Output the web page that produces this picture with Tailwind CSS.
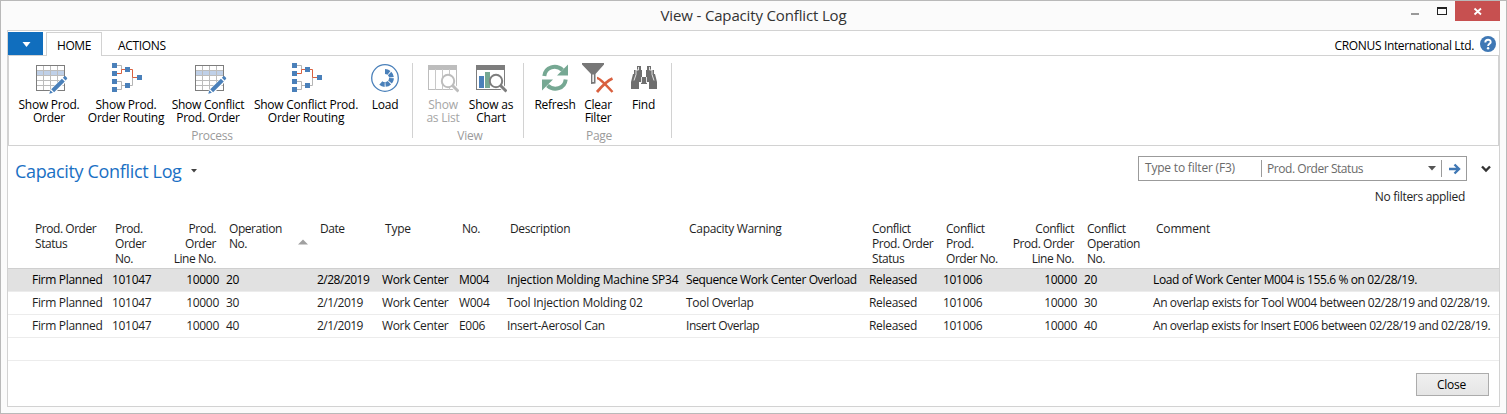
<!DOCTYPE html>
<html lang="en">
<head>
<meta charset="utf-8">
<title>View - Capacity Conflict Log</title>
<script src="https://cdn.jsdelivr.net/npm/@tailwindcss/browser@4"></script>
</head>
<body class="h-[414px] w-[1507px] overflow-hidden font-['Open_Sans','Noto_Sans',sans-serif] text-[12px] tracking-[-0.24px] text-[#1e1e1e]">
<svg width="0" height="0" class="absolute">
  <symbol id="tbl" viewBox="33 63 32 32" overflow="visible">
    <rect x="36.5" y="65.5" width="28" height="25" fill="#fff"/>
    <rect x="37" y="70" width="27" height="5.5" fill="#bfd0e8"/>
    <path d="M43.5 66v24M50.5 66v24M57.5 66v24M37 70.500h27M37 75.500h27M37 80.500h27M37 85.500h27" stroke="#bcbcbc" fill="none"/>
    <rect x="36.500" y="65.500" width="28" height="25" fill="none" stroke="#7d7d7d"/>
    <path d="M48 95.500l2-5.500 13-13 5 3-14 14z" fill="#fff"/>
    <path d="M49.300 93.800l1-3.600 2.600 2.600zM51.200 89.300l10.700-10.600 2.900 2.900-10.700 10.600zM62.900 77.800l1.500-1.500q.6-.5 1.200 0l1.400 1.400q.5.6 0 1.200l-1.500 1.500z" fill="#4a80ba"/>
  </symbol>
  <symbol id="rt" viewBox="110 63 32 32" overflow="visible">
    <path d="M117 65.500h4.500v4M117 81.500h4.500v8H117M121.500 85.500h4M130 85.500h2.500v-8" stroke="#b5b5b5" fill="none"/>
    <path d="M117 73.500h4.500v-4h4M130 69.500h2.500v8h5" stroke="#d9603f" fill="none"/>
    <path d="M112 63h5v5h-5zM112 71h5v5h-5zM112 79h5v5h-5zM112 87h5v5h-5zM125 67h5v5h-5zM125 83h5v5h-5zM137 75h5v5h-5z" fill="#4a80ba"/>
  </symbol>
</svg>
<div class="flex h-full flex-col border border-[#b9b9b9] bg-[#fbfbfb] px-[6px] pb-[6px]">
  <div class="relative flex h-[29px] shrink-0 items-center justify-center text-[15px] tracking-[-0.15px] text-[#333]">
    <span class="whitespace-nowrap">View - Capacity Conflict Log</span>
    <div class="absolute top-0 right-0 flex h-[20px]">
      <svg width="96" height="20" viewBox="0 0 96 20"><rect x="51" y="0" width="45" height="20" fill="#c75050"/><rect x="7" y="12" width="8" height="2" fill="#999"/><path d="M33 6h10v8H33zM34 8v5h8V8z" fill="#222" fill-rule="evenodd"/><path d="M70.500 7.500l6.500 6M77 7.500l-6.500 6" stroke="#fff" stroke-width="1.800"/></svg>
    </div>
  </div>
  <div class="flex min-h-0 flex-1 flex-col border border-[#d2d2d2] bg-white">
    <div class="flex h-[24px] shrink-0 items-stretch pt-[1px]">
      <div class="flex w-[35px] items-start bg-[#106ebe]"><svg width="35" height="23"><path d="M14.500 10h8l-4 5z" fill="#fff"/></svg></div>
      <div class="z-10 ml-[3px] flex h-[24px] w-[56px] items-center justify-center border border-b-0 border-[#d2d2d2] bg-white pt-[3px] text-black tracking-[-0.4px]">HOME</div>
      <div class="ml-[16px] flex items-center pt-[4px] text-black tracking-[-0.33px]">ACTIONS</div>
      <div class="mr-[3px] ml-auto flex items-center gap-[6px] text-black tracking-[-0.35px]"><span class="pt-[4px]">CRONUS International Ltd.</span>
        <svg width="16" height="16" class="mt-[1px]"><circle cx="8" cy="8" r="8" fill="#3f78b5"/><path d="M5.300 6.400C5.300 2.700 10.900 3 10.700 6.100 10.600 7.800 8.100 8 8.100 10" stroke="#fff" stroke-width="1.900" fill="none"/><circle cx="8.100" cy="12.300" r="1.200" fill="#fff"/></svg>
      </div>
    </div>
    <div class="flex h-[91px] shrink-0 border border-[#d2d2d2] text-center leading-[13px] text-black">
      <div class="-mt-px flex w-[403px] flex-col pt-[8px]">
        <div class="flex h-[66px] whitespace-nowrap">
          <div class="flex w-[80px] flex-col items-center gap-[3px]"><svg width="32" height="32" class="shrink-0 overflow-visible"><use href="#tbl"/></svg><div>Show Prod.<br>Order</div></div>
          <div class="flex w-[74px] flex-col items-center gap-[3px]"><svg width="32" height="32" class="shrink-0 overflow-visible"><use href="#rt"/></svg><div>Show Prod.<br>Order Routing</div></div>
          <div class="flex w-[90px] flex-col items-center gap-[3px]"><svg width="32" height="32" class="shrink-0 overflow-visible"><use href="#tbl"/></svg><div>Show Conflict<br>Prod. Order</div></div>
          <div class="flex w-[106px] flex-col items-center gap-[3px]"><svg width="32" height="32" class="shrink-0 overflow-visible"><use href="#rt"/></svg><div>Show Conflict Prod.<br>Order Routing</div></div>
          <div class="flex w-[52px] flex-col items-center gap-[3px]"><svg width="32" height="32" viewBox="369 63 32 32" class="shrink-0"><circle cx="385" cy="78" r="13.300" fill="#fff" stroke="#4a80ba" stroke-width="1.300"/><path d="M385 71.500a6.500 6.500 0 1 1-4.200 11.500" fill="none" stroke="#4a80ba" stroke-width="4.800" stroke-dasharray="4.300 .8"/></svg><div>Load</div></div>
        </div>
        <div class="pl-[3px] text-[#9b9b9b]">Process</div>
      </div>
      <div class="mt-[7px] h-[75px] w-px bg-[#d2d2d2]"></div>
      <div class="-mt-px flex w-[110px] flex-col pt-[8px]">
        <div class="flex h-[66px] whitespace-nowrap pl-[6px]">
          <div class="flex w-[48px] flex-col items-center gap-[3px] text-[#a5a5a5]"><svg width="32" height="32" viewBox="427 63 32 32" class="shrink-0"><rect x="428.500" y="65.500" width="28" height="24" fill="#fff" stroke="#bdbdbd"/><path d="M428 65h29v5h-29z" fill="#bdbdbd"/><path d="M435.500 69v21M442.500 69v21M449.500 69v21" stroke="#c8c8c8"/><path d="M451 84l8 8" stroke="#fff" stroke-width="5"/><circle cx="448" cy="81" r="6.200" fill="#fff" stroke="#bdbdbd" stroke-width="2"/><path d="M452.500 85.500l6 6" stroke="#bdbdbd" stroke-width="3"/></svg><div>Show<br>as List</div></div>
          <div class="flex w-[48px] flex-col items-center gap-[3px]"><svg width="32" height="32" viewBox="476 63 32 32" class="shrink-0"><rect x="477.500" y="65.500" width="28" height="24" fill="#fff" stroke="#7d7d7d"/><path d="M477 65h29v5h-29z" fill="#7d7d7d"/><path d="M480 76h5v12h-5z" fill="#4a80ba"/><path d="M486 72h5v16h-5z" fill="#76a893"/><path d="M500 84l8 8" stroke="#fff" stroke-width="5"/><circle cx="497" cy="81" r="6.200" fill="#fff" stroke="#7d7d7d" stroke-width="2"/><path d="M501.500 85.500l6 6" stroke="#7d7d7d" stroke-width="3"/></svg><div>Show as<br>Chart</div></div>
        </div>
        <div class="pl-[4px] text-[#9b9b9b]">View</div>
      </div>
      <div class="mt-[7px] h-[75px] w-px bg-[#d2d2d2]"></div>
      <div class="-mt-px flex w-[147px] flex-col pt-[8px]">
        <div class="flex h-[66px] whitespace-nowrap pl-[8px]">
          <div class="flex w-[46px] flex-col items-center gap-[3px]"><svg width="32" height="32" viewBox="539 63 32 32" class="shrink-0"><path d="M544.300 76c1-9 11.500-12 18.200-6" fill="none" stroke="#76a893" stroke-width="4"/><path d="M568 64.500v11h-11z" fill="#76a893"/><path d="M565.700 79.500c-1 9-11.500 12-18.200 6" fill="none" stroke="#76a893" stroke-width="4"/><path d="M542 90.500v-11h11z" fill="#76a893"/></svg><div>Refresh</div></div>
          <div class="flex w-[40px] flex-col items-center gap-[3px]"><svg width="34" height="32" viewBox="584 63 34 32" class="shrink-0"><path d="M585 63h22v1.500l-8.500 9.500v9.500l-4.500.5V74l-9-9.500z" fill="#777"/><path d="M595.300 74.500h1.700v7.500h-1.700z" fill="#eee"/><path d="M600 78c2 0 10 8 15.500 14" stroke="#d9603f" stroke-width="2.400" fill="none"/><path d="M615.500 78.500c-5 2-10 7-15.500 13.500" stroke="#d9603f" stroke-width="2.800" fill="none"/></svg><div>Clear<br>Filter</div></div>
          <div class="flex w-[51px] flex-col items-center gap-[3px]"><svg width="32" height="32" viewBox="628 63 32 32" class="shrink-0"><path d="M637 66h4v4h1v7h4v-7h1v-4h4v4h3v4h1l2 8v7h-8v-7h-2v2h-6v-2h-2v7h-8v-7l2-8h1v-4h3z" fill="#6e6e6e"/><path d="M638.500 67v3h-2.500v4.500l-2 6M649.500 67v3h2.500v4.500l2 6M641.500 77v6M646.500 77v6" fill="none" stroke="#fff" stroke-width=".8"/></svg><div>Find</div></div>
        </div>
        <div class="pl-[3px] text-[#9b9b9b]">Page</div>
      </div>
      <div class="mt-[7px] h-[75px] w-px bg-[#d2d2d2]"></div>
    </div>
    <div class="flex h-[75px] shrink-0 justify-between pl-[7px]">
      <div class="flex h-[50px] items-center gap-[9px] text-[18px] tracking-[-0.34px] text-[#1a70c4]"><span class="whitespace-nowrap">Capacity Conflict Log</span><svg width="7" height="6"><path d="M0 1h6L3 4.500z" fill="#444"/></svg></div>
      <div class="flex flex-col pt-[10px]">
        <div class="flex items-center">
          <div class="flex h-[25px] w-[329px] items-center border border-[#9b9b9b] bg-white text-[#6a6a6a]">
            <span class="w-[122px] pb-[2px] pl-[6px] tracking-[-0.2px]">Type to filter (F3)</span>
            <span class="h-[17px] w-px bg-[#9b9b9b]"></span>
            <span class="w-[166px] pl-[5px] tracking-[-0.45px]">Prod. Order Status</span>
            <svg width="8" height="5"><path d="M0 0h8L4 4.500z" fill="#555"/></svg>
            <span class="ml-[5px] h-[17px] w-px bg-[#9b9b9b]"></span>
            <svg width="12" height="12" class="ml-[7px]"><path d="M0 6h10M5.500 1.500L10 6 5.500 10.500" fill="none" stroke="#4078b5" stroke-width="2.400"/></svg>
          </div>
          <svg width="10" height="8" class="mr-[8px] ml-[14px]"><path d="M1 1.500l4 4 4-4" fill="none" stroke="#333" stroke-width="2.400"/></svg>
        </div>
        <div class="mt-[7px] mr-[34px] text-right leading-[18px] tracking-[-0.31px]">No filters applied</div>
      </div>
    </div>
    <div class="grid h-[48px] shrink-0 grid-cols-[24px_80px_50px_57px_7px_91px_65px_77px_48px_179px_183px_74px_60px_74px_7px_69px_minmax(0,1fr)] border-b border-[#cfcfcf] leading-[15px] tracking-[-0.45px] whitespace-nowrap [&>*]:pl-[3px]">
      <i></i><div>Prod. Order<br>Status</div><div>Prod.<br>Order<br>No.</div><div class="pr-[3px] text-right">Prod.<br>Order<br>Line No.</div><i></i><div class="flex items-center justify-between"><span class="self-start">Operation<br>No.</span><svg width="10" height="6" class="mr-[9px] mb-[5px]"><path d="M0 5.500h10L5 .5z" fill="#a0a0a0"/></svg></div><div>Date</div><div class="tracking-[-0.2px]">Type</div><div>No.</div><div class="tracking-[-0.35px]">Description</div><div class="tracking-[-0.3px]">Capacity Warning</div><div>Conflict<br>Prod. Order<br>Status</div><div>Conflict<br>Prod.<br>Order No.</div><div class="pr-[3px] text-right">Conflict<br>Prod. Order<br>Line No.</div><i></i><div>Conflict<br>Operation<br>No.</div><div class="tracking-[-0.2px]">Comment</div>
    </div>
    <div class="grid shrink-0 auto-rows-[23px] grid-cols-[24px_80px_50px_57px_7px_91px_65px_77px_48px_179px_183px_74px_60px_74px_7px_69px_minmax(0,1fr)] leading-[22px] tracking-[-0.3px] whitespace-nowrap [&>*]:border-b [&>*]:border-[#ececec]">
      <div class="col-span-full grid grid-cols-subgrid bg-[#e1e1e1] text-black"><i></i><div>Firm Planned</div><div>101047</div><div class="text-right">10000</div><i></i><div>20</div><div class="tracking-[-0.5px]">2/28/2019</div><div class="tracking-[-0.35px]">Work Center</div><div>M004</div><div class="tracking-[-0.22px]">Injection Molding Machine SP34</div><div class="tracking-[-0.4px]">Sequence Work Center Overload</div><div>Released</div><div>101006</div><div class="text-right">10000</div><i></i><div>20</div><div class="tracking-[-0.38px]">Load of Work Center M004 is 155.6 % on 02/28/19.</div></div>
      <div class="col-span-full grid grid-cols-subgrid"><i></i><div>Firm Planned</div><div>101047</div><div class="text-right">10000</div><i></i><div>30</div><div class="tracking-[-0.5px]">2/1/2019</div><div class="tracking-[-0.35px]">Work Center</div><div>W004</div><div class="tracking-[-0.2px]">Tool Injection Molding 02</div><div>Tool Overlap</div><div>Released</div><div>101006</div><div class="text-right">10000</div><i></i><div>30</div><div class="tracking-[-0.4px]">An overlap exists for Tool W004 between 02/28/19 and 02/28/19.</div></div>
      <div class="col-span-full grid grid-cols-subgrid"><i></i><div>Firm Planned</div><div>101047</div><div class="text-right">10000</div><i></i><div>40</div><div class="tracking-[-0.5px]">2/1/2019</div><div class="tracking-[-0.35px]">Work Center</div><div>E006</div><div class="tracking-[-0.3px]">Insert-Aerosol Can</div><div class="tracking-[-0.45px]">Insert Overlap</div><div>Released</div><div>101006</div><div class="text-right">10000</div><i></i><div>40</div><div class="tracking-[-0.44px]">An overlap exists for Insert E006 between 02/28/19 and 02/28/19.</div></div>
      <div class="col-span-full"></div>
    </div>
    <div class="mt-[12px] mr-[10px] ml-auto flex h-[23px] w-[73px] items-center justify-center border border-[#acacac] bg-gradient-to-b from-[#f0f0f0] to-[#e5e5e5] pr-[2px] text-black">Close</div>
  </div>
</div>
</body>
</html>
